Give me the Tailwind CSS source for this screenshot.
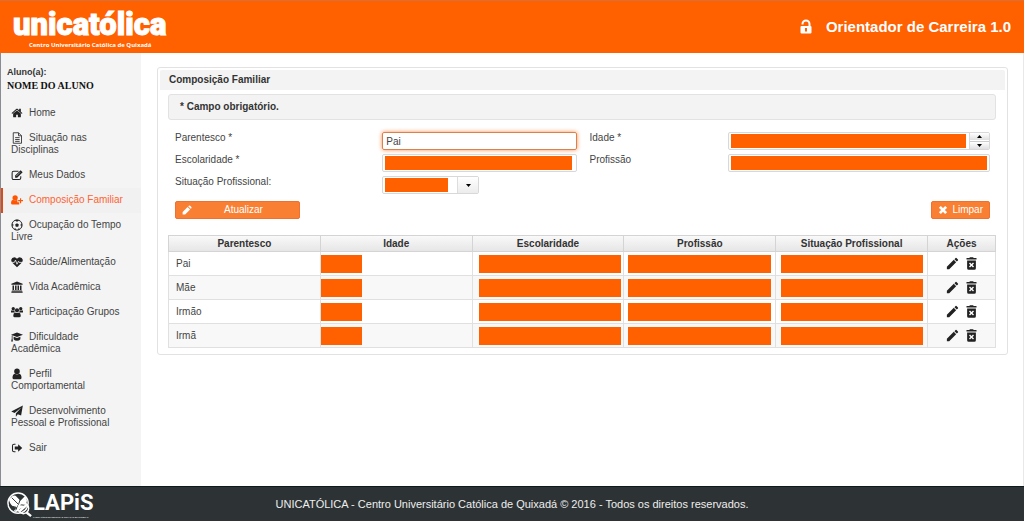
<!DOCTYPE html>
<html lang="pt-BR">
<head>
<meta charset="utf-8">
<meta name="viewport" content="width=device-width, initial-scale=1">
<title>Orientador de Carreira</title>
<script src="https://cdn.jsdelivr.net/npm/@tailwindcss/browser@4"></script>
</head>
<body class="flex min-h-screen flex-col bg-white font-['Liberation_Sans',Arial,sans-serif] text-[10px] leading-3 text-[#444]">
<svg class="hidden" aria-hidden="true">
  <symbol id="edit" viewBox="0 0 24 24"><path d="M3 17.25V21h3.75L17.81 9.94l-3.75-3.75L3 17.25zM20.71 7.04a1 1 0 0 0 0-1.41l-2.34-2.34a1 1 0 0 0-1.41 0l-1.83 1.83 3.75 3.75 1.83-1.83z"/></symbol>
  <symbol id="trash" viewBox="0 0 24 24"><path fill-rule="evenodd" d="M5 7v12.500q0 2.500 2.500 2.500h9q2.500 0 2.500-2.500V7zM9.600 10.200L12 12.600l2.400-2.400 1.600 1.600-2.400 2.400 2.400 2.400-1.600 1.600-2.400-2.400-2.400 2.400-1.600-1.600 2.400-2.400-2.400-2.400zM15.500 3l-1-1h-5l-1 1H4v2.500h16V3z"/></symbol>
</svg>

<header class="flex h-[53px] items-center justify-between border-t border-[#d8703a] bg-[#ff6000] pr-[13px] pl-[13px] text-white">
  <a href="#" class="flex flex-col pt-1">
    <span class="font-['Roboto',sans-serif] text-[31px] leading-[32px] font-black [-webkit-text-stroke:1px_white]">unicatólica</span>
    <span class="pl-4 font-['Open_Sans',sans-serif] text-[6px] leading-[8px] font-bold">Centro Universitário Católica de Quixadá</span>
  </a>
  <div class="flex items-center gap-3">
    <svg class="size-4" viewBox="0 0 16 16" fill="none"><rect x="2.500" y="7" width="11" height="7.500" rx="1" fill="#fff"/><path d="M4.500 5.500V5a3.500 3.500 0 0 1 7 0v2.500" stroke="#fff" stroke-width="2"/><path d="M8 9v3.500" stroke="#ff6000" stroke-width="2"/></svg>
    <span class="text-[15px] leading-5 font-bold">Orientador de Carreira 1.0</span>
  </div>
</header>

<div class="flex flex-1">
  <aside class="w-[141px] shrink-0 border-l border-[#8b8b96] bg-[#f4f4f4] pt-3">
    <div class="px-1.5 text-[#111]">
      <p class="text-[9px] leading-[14px] font-bold text-[#333]">Aluno(a):</p>
      <p class="font-['Liberation_Serif',serif] leading-[14px] font-bold">NOME DO ALUNO</p>
    </div>
    <nav class="mt-2 text-[#444] [&_a]:block [&_a]:border-l-2 [&_a]:border-transparent [&_a]:pt-1.5 [&_a]:pr-[15px] [&_a]:pb-[7px] [&_a]:pl-2 [&_svg]:mr-1.5 [&_svg]:-my-1 [&_svg]:inline-block [&_svg]:size-3 [&_svg]:align-middle [&_svg]:fill-[#222]">
      <a href="#"><svg viewBox="0 0 1792 1792"><path d="M1472 992v480q0 26-19 45t-45 19h-384v-384h-256v384h-384q-26 0-45-19t-19-45v-480q0-1 .5-3t.5-3l575-474 575 474q1 2 1 6zm223-69l-62 74q-8 9-21 11h-3q-13 0-21-7l-692-577-692 577q-12 8-24 7-13-2-21-11l-62-74q-8-10-7-23.5t11-21.5l719-599q32-26 76-26t76 26l244 204v-195q0-14 9-23t23-9h192q14 0 23 9t9 23v408l219 182q10 8 11 21.500t-7 23.500z"/></svg>Home</a>
      <a href="#"><svg viewBox="0 0 16 16"><path d="M3 1h7l4 4v10H3zM10 1v4h4M5.500 7.500h6M5.500 10h6M5.500 12.500h6" fill="none" stroke="#333" stroke-width="1.200"/></svg>Situação nas Disciplinas</a>
      <a href="#"><svg viewBox="0 0 16 16"><path d="M13 9.500V12q0 2-2 2H3.500q-2 0-2-2V5q0-2 2-2H10" fill="none" stroke="#222" stroke-width="1.400"/><path d="M5.500 11.500V8.800L12.800 1.500l2.700 2.700L8.200 11.500z"/><path d="M7 9.500l5-5" stroke="#f4f4f4" stroke-width=".8"/></svg>Meus Dados</a>
      <a href="#" class="border-[#e04a12]! bg-[#f1f1f1] text-[#ff6332]"><svg class="fill-[#ff5500]!" viewBox="0 0 16 16"><circle cx="5.500" cy="5" r="3.500"/><path d="M0 12q0-4 2.500-4.500 3 2 6 0V11H11v3H2q-2 0-2-2zM12 5.500h1.500V8H16v1.700h-2.500v2.500H12V9.700H9.500V8H12z"/></svg>Composição Familiar</a>
      <a href="#"><svg viewBox="0 0 16 16"><circle cx="8" cy="8" r="6.800" fill="none" stroke="#222" stroke-width="1.300"/><path d="M8 5.500l2.500 1.800L9.600 10.300H6.400L5.500 7.300zM5 2l3 1.600L11 2 8 1zM1.500 6l2 1.800L2 11zM14.500 6l-2 1.800L14 11zM4 12.500l2.500.3.500 2.200zM12 12.500l-2.500.3L9 15z"/></svg>Ocupação do Tempo Livre</a>
      <a href="#"><svg viewBox="0 0 16 16"><path d="M8 15L1.800 9Q0 7 .3 5 1 1.500 4.500 1.500 6.500 1.500 8 3.500 9.500 1.500 11.500 1.500q3.500 0 4.200 3.500Q16 7 14.200 9z"/><path d="M0 8.500h4.500L6 5.500l2 5.500 2-4 .8 1.500H16" fill="none" stroke="#f4f4f4" stroke-width="1.100"/></svg>Saúde/Alimentação</a>
      <a href="#"><svg viewBox="0 0 16 16"><path d="M8 .5l7.500 3.200V5H.5V3.700zM2 6h2v6H2zm3.400 0h2v6h-2zm3.300 0h2v6h-2zM12 6h2v6h-2zM1.200 12.500h13.600v1H1.200zM.5 14h15v1.500H.5z"/></svg>Vida Acadêmica</a>
      <a href="#"><svg viewBox="0 0 16 16"><circle cx="3" cy="3.500" r="2.200"/><circle cx="13" cy="3.500" r="2.200"/><circle cx="8" cy="5.800" r="2.800"/><path d="M0 6h4.500L5 8.500H0zM16 6h-4.500L11 8.500h5zM3 13q0-4 2.500-4.500 2.500 1.600 5 0Q13 9 13 13q0 2-2 2H5q-2 0-2-2z"/></svg>Participação Grupos</a>
      <a href="#"><svg viewBox="0 0 16 16"><path d="M8 2l8 3-8 3-8-3zM3.500 7.500L8 9.200l4.500-1.700v3.500Q11 13 8 13t-4.500-2zM1 6h1v4l.6 4H.2L1 10z"/></svg>Dificuldade Acadêmica</a>
      <a href="#"><svg viewBox="0 0 16 16"><circle cx="8" cy="4.500" r="3.700"/><path d="M2 13q0-5 3-5.500 3 2.200 6 0 3 .5 3 5.500 0 2-2 2H4q-2 0-2-2z"/></svg>Perfil Comportamental</a>
      <a href="#"><svg viewBox="0 0 16 16"><path d="M15.800.5L13.500 14 9 12.200 6.500 15.500V11.300L14 3 4.800 10.500.3 8.800z"/></svg>Desenvolvimento Pessoal e Profissional</a>
      <a href="#"><svg viewBox="0 0 16 16"><path d="M6 3H4Q2 3 2 5v6q0 2 2 2h2" fill="none" stroke="#222" stroke-width="1.400"/><path d="M9.500 3l5.500 5-5.500 5v-3H5V6h4.500z"/></svg>Sair</a>
    </nav>
  </aside>

  <main class="min-w-0 flex-1 border-r border-[#e8e8e8] pt-3.5 pr-[15px] pb-5 pl-4">
    <section class="rounded-[3px] border border-[#e2e2e2] p-0.5 pb-1.5">
      <h1 class="rounded-t-[2px] bg-[#f3f3f3] px-[9px] py-1 font-bold text-[#333]">Composição Familiar</h1>
      <div class="pt-1 pr-[9px] pl-2">
        <p class="rounded-[3px] border border-[#e2e2e2] bg-[#f3f3f3] px-[11px] py-1.5 font-bold text-[#333]">* Campo obrigatório.</p>

        <form class="pt-3 pr-1.5 pl-[7px]">
          <div class="grid grid-cols-[207fr_207fr_138fr_262fr] gap-y-1">
            <label for="parentesco">Parentesco *</label>
            <div class="pr-[13px]"><input id="parentesco" value="Pai" class="h-[18px] w-full rounded-[2px] border border-[#d9824f] px-[3px] text-[#444] shadow-[0_0_4px_#ff8a4a] outline-none"></div>
            <label for="idade">Idade *</label>
            <div class="flex h-[18px] overflow-hidden rounded-[2px] border border-[#d8d8d8]">
              <input id="idade" class="min-w-0 flex-1 bg-[#ff6000] bg-clip-content py-px pr-[3px] pl-0.5 outline-none">
              <div class="flex w-5 flex-col gap-px border-l border-[#d8d8d8]">
                <button type="button" aria-label="Aumentar" class="flex flex-1 items-center justify-center bg-linear-to-b from-white to-[#e0e0e0]"><svg class="h-[3px] w-[5px]" viewBox="0 0 5 3"><path d="M0 3L2.500 0 5 3z"/></svg></button>
                <button type="button" aria-label="Diminuir" class="flex flex-1 items-center justify-center border-t border-[#ccc] bg-linear-to-b from-white to-[#e0e0e0]"><svg class="h-[3px] w-[5px]" viewBox="0 0 5 3"><path d="M0 0L2.500 3 5 0z"/></svg></button>
              </div>
            </div>
            <label for="escolaridade">Escolaridade *</label>
            <div class="pr-[13px]"><input id="escolaridade" class="h-[18px] w-full rounded-[2px] border border-[#d8d8d8] bg-[#ff6000] bg-clip-content py-px pr-1 pl-0.5 outline-none"></div>
            <label for="profissao">Profissão</label>
            <input id="profissao" class="h-[18px] w-full rounded-[2px] border border-[#d8d8d8] bg-[#ff6000] bg-clip-content py-px pr-0.5 pl-0.5 outline-none">
            <label for="situacao">Situação Profissional:</label>
            <div class="relative h-[18px] w-[97px]">
              <select id="situacao" class="h-full w-full appearance-none rounded-[2px] border border-[#d8d8d8] bg-[#ff6000] bg-clip-content py-px pr-[30px] pl-0.5 outline-none"><option></option></select>
              <span class="pointer-events-none absolute inset-y-px right-px flex w-[21px] items-center justify-center border-l border-[#ddd] bg-linear-to-b from-white to-[#ececec]"><svg class="h-[3px] w-[5px]" viewBox="0 0 5 3"><path d="M0 0L2.500 3 5 0z"/></svg></span>
            </div>
          </div>
          <div class="mt-[7px] flex justify-between text-white">
            <button type="button" class="flex h-[18px] w-[125px] items-center rounded-[2px] border border-[#f07030] bg-[#f98033] pl-1.5"><svg class="size-2.5" viewBox="0 0 16 16" fill="#fff"><path d="M1 15v-4l8-8 4 4-8 8zM10 2l1-1q1-.6 2 0l2 2q.6 1 0 2l-1 1z"/></svg><span class="flex-1 pr-1">Atualizar</span></button>
            <button type="button" class="flex h-[18px] items-center gap-1 rounded-[2px] border border-[#f07030] bg-[#f98033] px-1.5"><svg class="size-2.5" viewBox="0 0 16 16" fill="none" stroke="#fff" stroke-width="4.500"><path d="M3 3l10 10M13 3L3 13"/></svg>Limpar</button>
          </div>
        </form>

        <table class="mt-4 w-full table-fixed border-collapse text-left [&_td]:h-6 [&_td]:border [&_td]:border-[#e0e0e0] [&_td]:px-[7px] [&_td]:py-0 [&_th]:border [&_th]:border-[#d4d4d4] [&_tr:nth-child(even)]:bg-[#f8f8f8]">
          <colgroup><col><col><col><col><col><col class="w-[68px]"></colgroup>
          <thead>
            <tr class="h-4 bg-linear-to-b from-[#f9f9f9] to-[#e5e5e5] text-center text-[#333]"><th>Parentesco</th><th>Idade</th><th>Escolaridade</th><th>Profissão</th><th>Situação Profissional</th><th>Ações</th></tr>
          </thead>
          <tbody id="familia"></tbody>
        </table>
      </div>
    </section>
  </main>
</div>

<footer class="grid h-[35px] grid-cols-[1fr_auto_1fr] items-center border-t border-[#111a1b] bg-[#2d3335] px-1.5 text-[#eee]">
  <a href="#" class="flex items-center text-white" aria-label="LAPIS">
    <svg class="size-[27px] shrink-0" viewBox="0 0 28 28" fill="none" stroke="#fff"><circle cx="12.500" cy="12.500" r="10.500" stroke-width="1.500"/><path d="M3 9q5-7 8-3l4 4 5-5q4 6-1 11l-5 3q-2 4-6 2l3-4q-6 0-8-8z" fill="#fff" stroke="none"/><path d="M6 7l7 7-3 6M16 5l-3 9 8 1M3 15l8 2" stroke="#2d3335" stroke-width="1"/><circle cx="18" cy="18" r="5.500" stroke-width="1.500"/><path d="M14 21l8-7M21 22l5 4" stroke-width="2.500"/></svg>
    <span class="flex flex-col">
      <span class="font-['Roboto',sans-serif] text-[22px] leading-[26px] font-bold">LAPiS</span>
      <span class="text-[2px] leading-[3px] whitespace-nowrap">LABORATÓRIO DE PESQUISA E INOVAÇÃO EM SISTEMAS</span>
    </span>
  </a>
  <p class="text-[11px]">UNICATÓLICA - Centro Universitário Católica de Quixadá © 2016 - Todos os direitos reservados.</p>
</footer>

<script>
  const bar = '<div class="h-[18px] bg-[#ff6000]"></div>';
  document.getElementById('familia').innerHTML = ['Pai', 'Mãe', 'Irmão', 'Irmã'].map(nome => `
    <tr>
      <td>${nome}</td>
      <td class="px-0!"><div class="h-[18px] w-[41px] bg-[#ff6000]"></div></td>
      <td class="pr-0.5! pl-1.5!">${bar}</td>
      <td class="pr-1! pl-1!">${bar}</td>
      <td class="pr-1! pl-[5px]!">${bar}</td>
      <td><div class="flex justify-center gap-1 text-[#222]">
        <button type="button" aria-label="Editar ${nome}"><svg class="size-[15px] fill-[#222]"><use href="#edit"/></svg></button>
        <button type="button" aria-label="Excluir ${nome}"><svg class="size-[15px] fill-[#222]"><use href="#trash"/></svg></button>
      </div></td>
    </tr>`).join('');
</script>
</body>
</html>
